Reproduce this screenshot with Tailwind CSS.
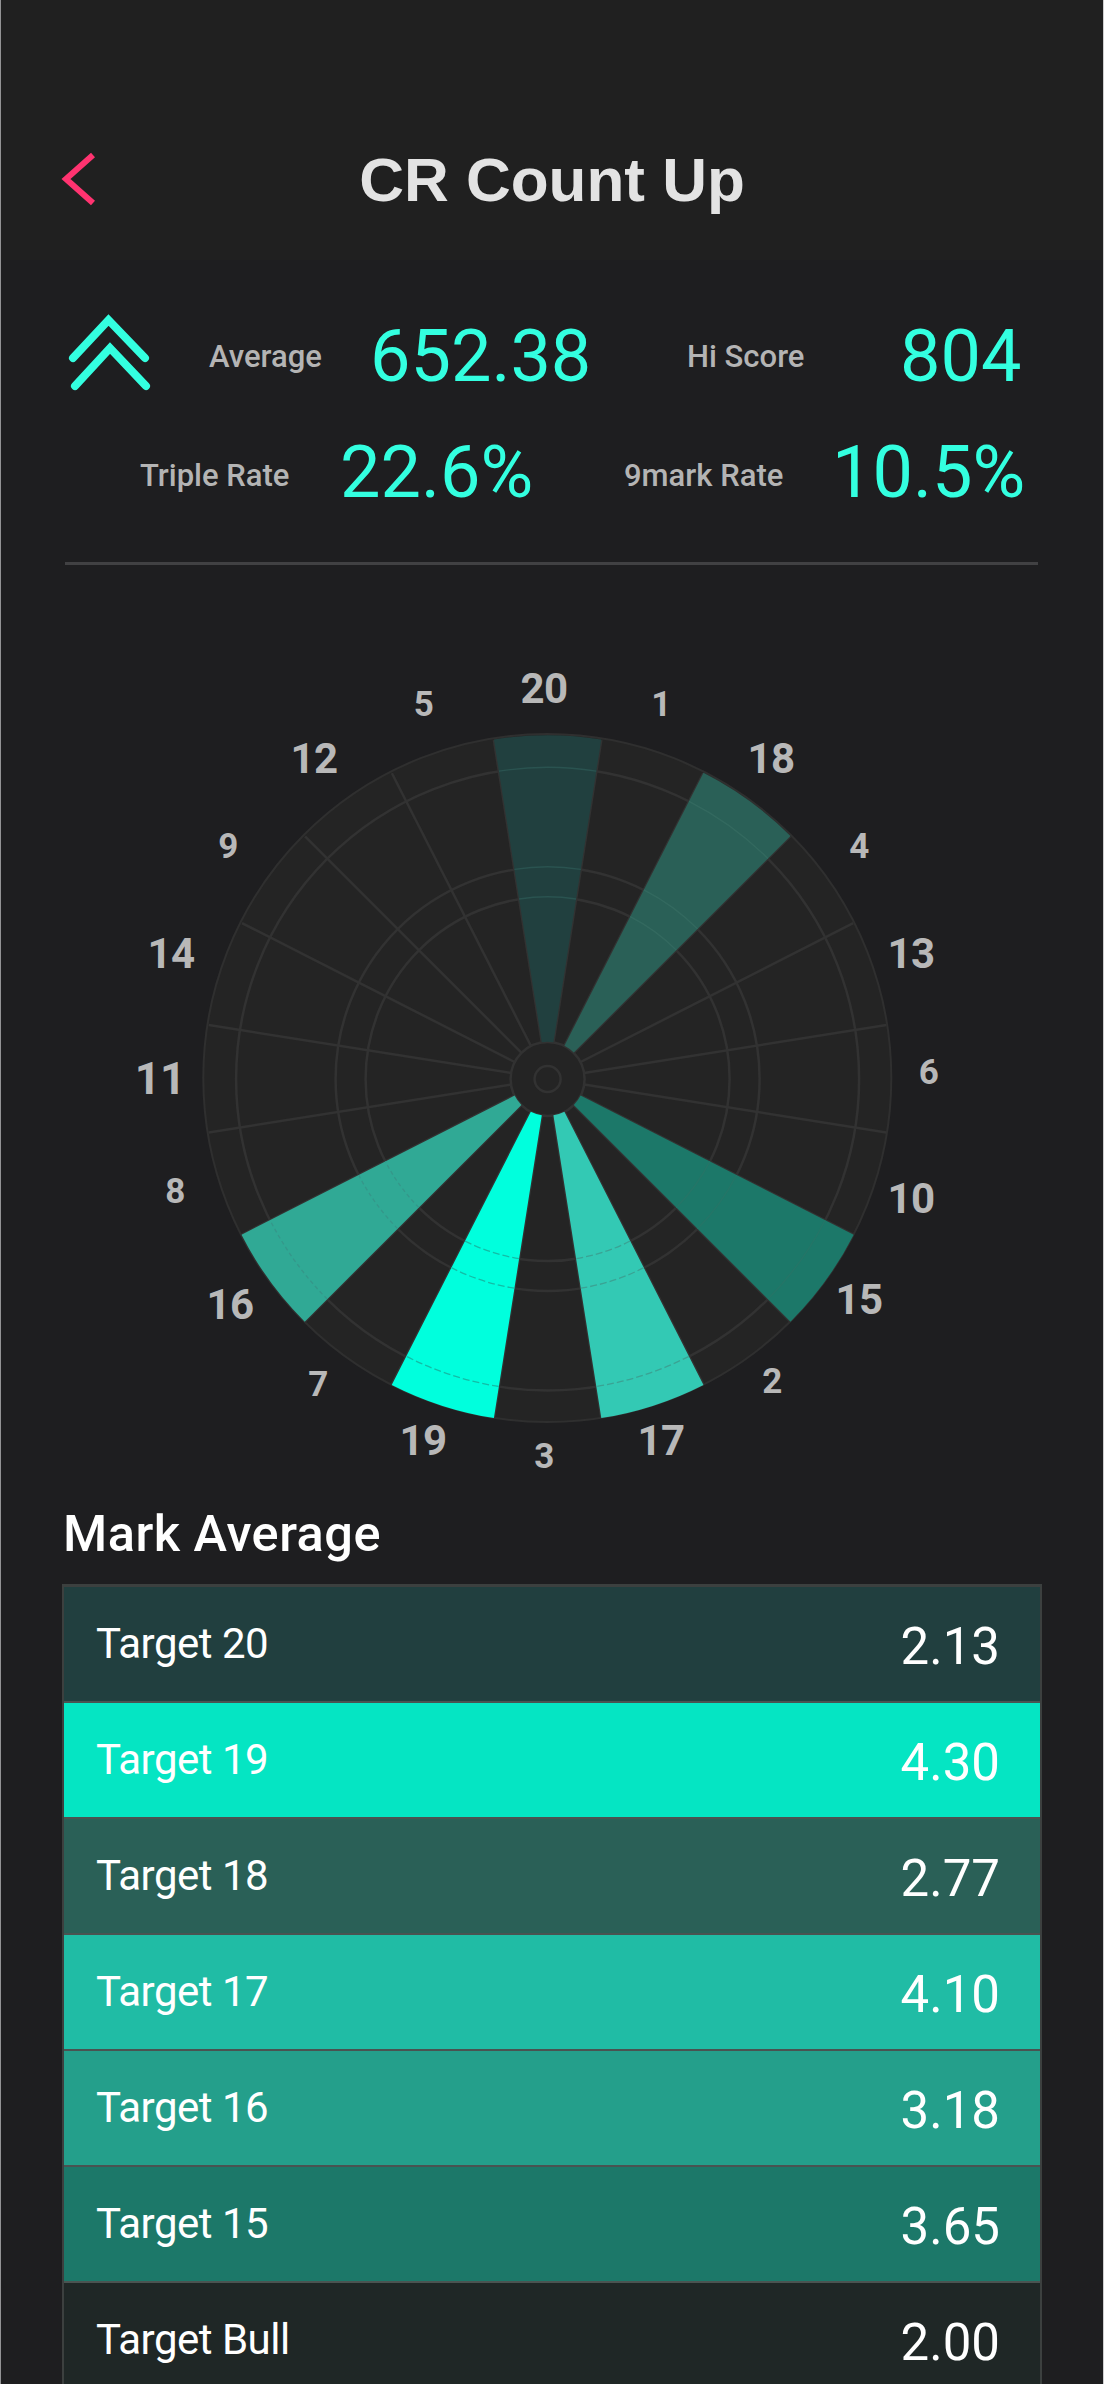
<!DOCTYPE html>
<html lang="en">
<head>
    <meta charset="UTF-8">
    <meta name="viewport" content="width=device-width, initial-scale=1.0">
    <title>CR Count Up</title>
    <script src="https://cdn.jsdelivr.net/npm/@tailwindcss/browser@4"></script>
</head>
<body class="bg-[#1e1e20]">

    <div class="w-[1104px] h-[2384px] overflow-hidden border-x border-l-[#939395] border-r-[#cfcfd0] bg-[#1e1e20] font-['Roboto',sans-serif]">

        <!-- header -->
        <header class="relative h-[260px] pt-[100px] flex items-center justify-center bg-[#202020]">
            <svg class="absolute left-[56px] top-[148px]" width="44" height="62" viewBox="0 0 44 62" fill="none" stroke="#ff3370" stroke-width="6">
                <path d="M36 7L9 31L36 55" />
            </svg>
            <h1 class="text-[62px] leading-[80px] font-bold text-[#e3e3e3] font-['Liberation_Sans',sans-serif]">CR Count Up</h1>
        </header>

        <!-- summary -->
        <section class="ml-[64px] mr-[65px] h-[305px] pt-[53px] border-b-3 border-[#414143]">
            <div class="h-[87px] flex items-center whitespace-nowrap text-[#33ffe0]">
                <svg class="w-[90px] shrink-0 self-start" height="80" viewBox="0 0 90 80" fill="none" stroke="#33ffe0" stroke-width="8" stroke-linecap="round">
                    <path d="M8 45L43.500 7L80 45M10 73L45 35L81 73" />
                </svg>
                <span class="ml-[54px] pt-[2px] w-[161px] text-[31px] font-medium text-[#b4b4b4]">Average</span>
                <span class="w-[317px] text-[72px] leading-none">652.38</span>
                <span class="pt-[2px] w-[213px] text-[31px] font-medium text-[#b4b4b4]">Hi Score</span>
                <span class="text-[72px] leading-none">804</span>
            </div>
            <div class="h-[145px] flex items-center whitespace-nowrap text-[#33ffe0]">
                <span class="ml-[75px] pt-[7px] w-[200px] text-[31px] font-medium text-[#b4b4b4]">Triple Rate</span>
                <span class="w-[284px] text-[72px] leading-none">22.6%</span>
                <span class="pt-[7px] w-[208px] text-[31px] font-medium text-[#b4b4b4]">9mark Rate</span>
                <span class="text-[72px] leading-none">10.5%</span>
            </div>
        </section>

        <!-- dart board -->
        <svg class="block -ml-px" width="1104" height="935" viewBox="0 565 1104 935">
            <circle cx="547.300" cy="1078" r="344" fill="#242424" stroke="#2f2f2f" stroke-width="2" />
            <g id="wires" stroke="#323232" stroke-width="2.500" fill="none">
                <circle cx="547.600" cy="1079" r="311.500" />
                <circle cx="547.600" cy="1079" r="212" />
                <circle cx="547.600" cy="1079" r="182" />
                <circle cx="547.600" cy="1079" r="37" />
                <circle cx="547.600" cy="1079" r="13" />
            </g>
            <g id="segments"></g>
            <g id="numbers" fill="#b8b8b8" font-family="Roboto, sans-serif" font-weight="700" text-anchor="middle" letter-spacing="-0.5"></g>
        </svg>

        <!-- mark average -->
        <section class="pl-[61px] pr-[61px]">
            <h2 class="h-[84px] pl-px text-[50.5px] leading-[68px] font-medium tracking-[0.5px] text-white">Mark Average</h2>
            <ul id="marks" class="border-x-2 border-t-3 border-[#3c403f] text-white"></ul>
        </section>
    </div>

    <script>
        const SVG = 'http://www.w3.org/2000/svg';
        const board = [20, 1, 18, 4, 13, 6, 10, 15, 2, 17, 3, 19, 7, 16, 8, 11, 14, 9, 12, 5];

        // fill, wire colour and wire dashes of the hit segments
        const hits = {
            20: ['#21403f', '#2a5350', 'none'],
            18: ['#2a6057', '#33695f', 'none'],
            15: ['#1c7869', '#257567', 'none'],
            17: ['#33c9b4', '#3aa394', '7 3'],
            19: ['#00ffdd', '#12bda6', '7 3'],
            16: ['#30a995', '#35978a', '4 3'],
        };

        // [x, baseline, font size]
        const labels = {
            20: [544, 703, 42], 1: [661, 716, 35], 18: [771, 773, 42], 4: [859, 858, 35],
            13: [911, 968, 42], 6: [928.5, 1084, 35], 10: [911, 1213, 42], 15: [859, 1314, 42],
            2: [772, 1393, 35], 17: [661, 1455, 42], 3: [544, 1468, 35], 19: [423, 1455, 42],
            7: [318, 1396, 35], 16: [230, 1319, 42], 8: [175, 1203, 35], 11: [160, 1094, 45],
            14: [171, 968, 42], 9: [228, 858, 35], 12: [314, 773, 42], 5: [423.5, 716, 35],
        };

        function point(r, deg) {
            const a = deg * Math.PI / 180;
            return (547.6 + r * Math.sin(a)).toFixed(1) + ' ' + (1078.8 - r * Math.cos(a)).toFixed(1);
        }

        function add(parent, tag, attrs) {
            const el = document.createElementNS(SVG, tag);
            for (const key in attrs) el.setAttribute(key, attrs[key]);
            parent.appendChild(el);
            return el;
        }

        const wires = document.getElementById('wires');
        const segments = document.getElementById('segments');
        const numbers = document.getElementById('numbers');

        board.forEach((n, i) => {
            const from = i * 18 - 9;
            const to = i * 18 + 9;
            add(wires, 'path', { d: `M${point(37, from)}L${point(343, from)}` });

            if (hits[n]) {
                const [fill, wire, dashes] = hits[n];
                add(segments, 'path', {
                    d: `M${point(37, from)}L${point(343.5, from)}A343.5 343.5 0 0 1 ${point(343.5, to)}L${point(37, to)}A37 37 0 0 0 ${point(37, from)}`,
                    fill,
                });
                [182, 212, 311.5].forEach(r => add(segments, 'path', {
                    d: `M${point(r, from)}A${r} ${r} 0 0 1 ${point(r, to)}`,
                    fill: 'none', stroke: wire, 'stroke-width': 1.3, 'stroke-dasharray': dashes,
                }));
            }

            const [x, y, size] = labels[n];
            add(numbers, 'text', { x, y, 'font-size': size }).textContent = n;
        });

        const marks = [
            ['Target 20', '2.13', 'bg-[#213f3f]'],
            ['Target 19', '4.30', 'bg-[#05e5c3]'],
            ['Target 18', '2.77', 'bg-[#2a6057]'],
            ['Target 17', '4.10', 'bg-[#20bca5]'],
            ['Target 16', '3.18', 'bg-[#249f8b]'],
            ['Target 15', '3.65', 'bg-[#1c7869]'],
            ['Target Bull', '2.00', 'bg-[#1f2726]'],
        ];

        document.getElementById('marks').innerHTML = marks.map(([name, value, color]) => `
            <li class="h-[116px] pl-[32px] pr-[40px] flex items-center justify-between border-b-2 border-[#4a5351] leading-none ${color}">
                <span class="text-[42px] tracking-[-0.5px]">${name}</span>
                <span class="pt-[5px] text-[51px]">${value}</span>
            </li>`).join('');
    </script>
</body>
</html>
